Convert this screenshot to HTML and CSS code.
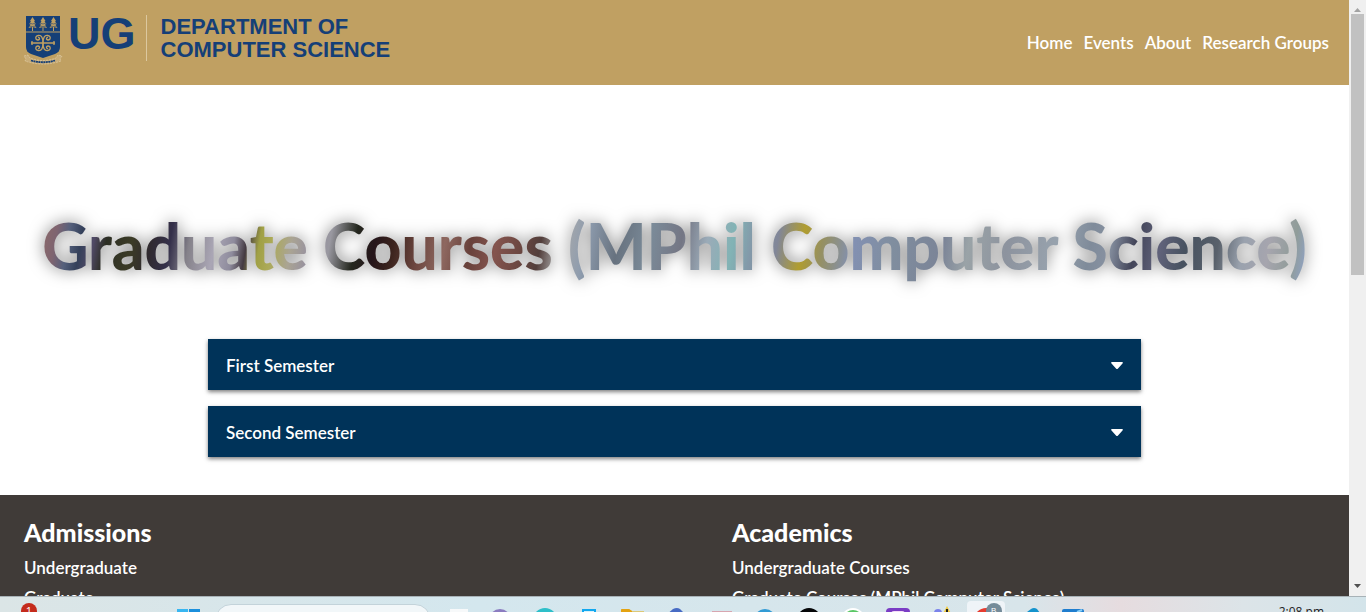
FILE: index.html
```html
<!DOCTYPE html>
<html lang="en">
<head>
<meta charset="utf-8">
<title>Graduate Courses - Department of Computer Science</title>
<link rel="stylesheet" href="styles.css">
</head>
<body>
<div class="browser">
  <div class="page">
    <header class="header">
      <a class="logo" href="#">
        <svg class="crest" viewBox="0 0 40 50" width="40" height="50" aria-hidden="true">
          <path d="M3 1H37V32Q37 37 32 39L20 43L8 39Q3 37 3 32Z" fill="#153f77"/>
          <path d="M3 17H37" stroke="#c0a062" stroke-width="1"/>
          <g stroke="#c0a062" fill="#c0a062">
            <g id="tree"><path d="M9.500 4V16" stroke-width="1"/><path d="M9.500 2L12 6L11 6.500L13 9L11.500 9.500L13.500 13L9.500 12L5.500 13L7.500 9.500L6 9L8 6.500L7 6Z" stroke="none"/><path d="M6 8L9.500 9L13 8M5.500 11L9.500 11.500L13.500 11" stroke="#153f77" stroke-width=".6" fill="none"/></g>
            <use href="#tree" x="10.500"/><use href="#tree" x="21"/>
          </g>
          <g fill="none" stroke="#c0a062" stroke-width="1.300">
            <path d="M8 28H32M9 26V30M31 26V30"/>
            <path d="M20 28Q20 20 15.500 20.500Q12 21 13 24Q15 26 16.500 24Q16.500 22 15 22.500"/>
            <path d="M20 28Q20 20 24.500 20.500Q28 21 27 24Q25 26 23.500 24Q23.500 22 25 22.500"/>
            <path d="M20 28Q20 36 15.500 35.500Q12 35 13 32Q15 30 16.500 32Q16.500 34 15 33.500"/>
            <path d="M20 28Q20 36 24.500 35.500Q28 35 27 32Q25 30 23.500 32Q23.500 34 25 33.500"/>
          </g>
          <path d="M1 41L5 40L7 43Q20 48 33 43L35 40L39 41L37 44L38 46Q20 52 2 46L3 44Z" fill="#c9ad78" stroke="#dfcda8" stroke-width=".7" stroke-dasharray="2 1"/>
          <path d="M8 45.500Q20 49 32 45.500" fill="none" stroke="#153f77" stroke-width="1.800" stroke-dasharray="2 .5"/>
        </svg>
        <span class="logo-ug">UG</span>
        <span class="logo-name">DEPARTMENT OF<br>COMPUTER SCIENCE</span>
      </a>
      <nav class="nav">
        <a href="#">Home</a><a href="#">Events</a><a href="#">About</a><a href="#">Research Groups</a>
      </nav>
    </header>
    <main class="main">
      <h1 class="title"><span>Graduate Courses (MPhil Computer Science)</span></h1>
      <div class="accordion">
        <button class="panel" type="button">First Semester<svg width="12" height="7" viewBox="0 0 12 7" aria-hidden="true"><path d="M1 0H11Q12.500 .5 11.500 1.500L7 6.500Q6 7.500 5 6.500L.5 1.500Q-.5 .5 1 0Z" fill="#fff"/></svg></button>
        <button class="panel" type="button">Second Semester<svg width="12" height="7" viewBox="0 0 12 7" aria-hidden="true"><path d="M1 0H11Q12.500 .5 11.500 1.500L7 6.500Q6 7.500 5 6.500L.5 1.500Q-.5 .5 1 0Z" fill="#fff"/></svg></button>
      </div>
    </main>
    <footer class="footer">
      <section>
        <h2>Admissions</h2>
        <a href="#">Undergraduate</a>
        <a href="#">Graduate</a>
      </section>
      <section>
        <h2>Academics</h2>
        <a href="#">Undergraduate Courses</a>
        <a href="#">Graduate Courses (MPhil Computer Science)</a>
      </section>
    </footer>
  </div>
  <div class="scrollbar" aria-hidden="true">
    <svg width="7" height="4" viewBox="0 0 7 4"><path d="M0 4L3.500 0L7 4Z" fill="#a3a3a3"/></svg>
    <div class="track"><div class="thumb"></div></div>
    <svg width="7" height="4" viewBox="0 0 7 4"><path d="M0 0H7L3.500 4Z" fill="#505050"/></svg>
  </div>
</div>
<div class="taskbar">
  <span class="alert">1</span>
  <svg class="start" width="24" height="24" viewBox="0 0 24 24"><path d="M0 0H11V11H0ZM0 12H11V23H0Z" fill="#38b6f1"/><path d="M12 0H23V11H12ZM12 12H23V23H12Z" fill="#1b8fdc"/></svg>
  <input class="search" type="text" aria-label="Search">
  <div class="apps">
    <svg viewBox="0 0 44 30"><path d="M13 12H31V30H13Z" fill="#f7f9fa"/></svg>
    <svg viewBox="0 0 44 30"><circle cx="19" cy="23" r="11" fill="#8b7cc0"/></svg>
    <svg viewBox="0 0 44 30"><circle cx="20" cy="23" r="12" fill="#2ebfc9"/></svg>
    <svg viewBox="0 0 44 30"><path d="M14 13H26V30H14Z" fill="#d8f1fb" stroke="#12a8ef" stroke-width="2"/></svg>
    <svg viewBox="0 0 44 30"><path d="M8 14V13Q8 12 9 12H16L19 14H31V30H8Z" fill="#ddc878"/><path d="M8 14V13Q8 12 9 12H16L19 14V16H8Z" fill="#e4a312"/></svg>
    <svg viewBox="0 0 44 30"><path d="M8 19L16 12Q20 10 23 12L31 20V30H8Z" fill="#476bc4"/></svg>
    <svg viewBox="0 0 44 30"><path d="M11 14H31V30H11Z" fill="#d8a6b0"/></svg>
    <svg viewBox="0 0 44 30"><circle cx="20" cy="23" r="11" fill="#329bd5"/></svg>
    <svg viewBox="0 0 44 30"><circle cx="20" cy="23" r="12" fill="#050608"/></svg>
    <svg viewBox="0 0 44 30"><circle cx="20" cy="23" r="11" fill="#5bc766" stroke="#fff" stroke-width="2"/></svg>
    <svg viewBox="0 0 44 30"><rect x="9" y="11" width="24" height="24" rx="4" fill="#7a3cc4"/><rect x="14" y="14" width="14" height="14" rx="3" fill="#f4dcf6"/></svg>
    <svg viewBox="0 0 44 30"><circle cx="17" cy="16" r="4" fill="#7b83eb"/><path d="M26 9L33 22H19Z" fill="#f2cb3d"/><path d="M26 12V16" stroke="#222" stroke-width="2"/></svg>
    <svg viewBox="0 0 44 30"><rect x="2" y="4" width="38" height="40" rx="4" fill="#eff4f8"/><circle cx="21" cy="23" r="12" fill="#e63c30"/><circle cx="29" cy="14" r="8" fill="#748b99"/><text x="26" y="16" font-family="Liberation Sans, sans-serif" font-size="8" fill="#fff">B</text></svg>
    <svg viewBox="0 0 44 30"><path d="M14 18L22 12Q25 10 28 12L34 20V30H14Z" fill="#1493cc"/></svg>
    <svg viewBox="0 0 44 30"><rect x="9" y="12" width="22" height="24" rx="2" fill="#1f7dce"/><path d="M24 15L29 13" stroke="#8ad0f8" stroke-width="2"/></svg>
  </div>
  <time class="clock">2:08 pm</time>
</div>
</body>
</html>
```

FILE: styles.css
```css
* { box-sizing: border-box; }
body {
  margin: 0;
  height: 100vh;
  overflow: hidden;
  display: flex;
  flex-direction: column;
  font-family: "Gill Sans", "Gill Sans MT", Lato, sans-serif;
  font-size: 17px;
  color: #fff;
  background: #fff;
}
a { color: inherit; text-decoration: none; }
.browser { flex: 1; min-height: 0; display: flex; }
.page { flex: 1; min-width: 0; overflow: hidden; background: #fff; }

.header {
  display: flex;
  justify-content: space-between;
  align-items: center;
  min-height: 85px;
  padding: 0 20px 0 23px;
  background: #c0a062;
}
.logo {
  display: flex;
  align-items: flex-start;
  padding-bottom: 6px;
  font-family: "Liberation Sans", Arial, sans-serif;
  font-weight: 700;
  color: #153f77;
}
.logo-ug { font-size: 45px; line-height: 38px; padding: 0 10px 0 5px; }
.logo-name {
  border-left: 1px solid #dcc89f;
  padding-left: 14px;
  font-size: 22px;
  line-height: 23px;
}
.nav { display: flex; gap: 11px; font-weight: 600; }

.main { padding: 124px 0 38px; }
.title {
  margin: 0 0 56px;
  text-align: center;
  font-size: 64px;
  line-height: 74px;
  font-weight: 900;
  white-space: nowrap;
}
.title span {
  color: transparent;
  background: linear-gradient(100deg,
    #8f6a68 0%, #7e6470 1.5%, #55607c 2.5%, #34405a 3.5%, #514a66 4.5%, #2c2e24 5.5%, #3b3b26 7.5%,
    #302a30 9%, #34304a 10.5%, #85828a 12%, #aaa6b5 14%, #8e8b9c 15.5%, #443a42 16.5%,
    #a0a044 17.5%, #acaa58 18.5%, #aaa493 20%, #96909f 21.5%, #9998a0 23%, #24271e 25%,
    #25151a 26.5%, #3c241e 28%, #6d4740 30%, #8e6860 32%, #68413b 34%, #84544e 36%,
    #6b4741 38%, #523e3b 39.5%, #aaa 41%, #8e9cae 43%, #67727f 45.5%, #7b8b99 48%,
    #747684 50.5%, #9babb8 52.5%, #82b3b5 54.5%, #8399a9 56%, #818698 58%,
    #b09d30 60%, #969060 61.5%, #8290b2 64%, #808e9f 67%, #7b8497 71%, #9aa3a7 73%,
    #8d939e 76%, #98a3ae 80%, #7f8b9a 82.5%, #8791a1 84%, #434559 86%, #60627a 88%,
    #475260 90%, #59616b 92.5%, #9aa2ae 94.5%, #a6a5ae 96.5%, #909c99 98.5%, #8fa3cf 100%);
  -webkit-background-clip: text;
  background-clip: text;
  filter: drop-shadow(0 0 8px rgba(0, 0, 0, .5));
}
.accordion {
  display: flex;
  flex-direction: column;
  gap: 16px;
  padding: 0 208px;
}
.panel {
  display: flex;
  justify-content: space-between;
  align-items: center;
  min-height: 51px;
  padding: 1px 18px 0;
  border: 0;
  background: #003359;
  color: #fff;
  font: inherit;
  font-weight: 600;
  box-shadow: 0 2px 4px rgba(0, 0, 0, .5);
}

.footer {
  display: grid;
  grid-template-columns: 6fr 5fr;
  padding: 23px 27px 24px 24px;
  min-height: 300px;
  background: #403b38;
  font-weight: 600;
}
.footer h2 { margin: 0 0 7px; font-size: 25px; line-height: 28px; font-weight: 900; }
.footer a { display: block; line-height: 30px; }

.scrollbar {
  width: 17px;
  padding: 8px 0;
  display: flex;
  flex-direction: column;
  align-items: center;
  gap: 2px;
  background: #f0f0f0;
}
.track { flex: 1; }
.thumb { width: 13px; height: 46%; background: #c1c1c1; }

.taskbar {
  position: relative;
  height: 16px;
  overflow: hidden;
  display: flex;
  align-items: flex-start;
  padding: 0 42px 0 177px;
  border-top: 1px solid #a8b2b7;
  background: linear-gradient(90deg, #dbe5e6, #d4e7ee 35%, #d8e5ea 75%, #e6dcdf 82%, #dce4e8 91%, #d3e4ea);
}
.alert {
  position: absolute;
  left: 21px;
  top: 6px;
  width: 16px;
  height: 16px;
  border-radius: 50%;
  background: #c42b1c;
  text-align: center;
  font: 11px/16px "Open Sans", sans-serif;
}
.start { margin-top: 12px; flex: none; }
.search {
  width: 216px;
  height: 32px;
  margin: 7px 6px 0 14px;
  border: 1px solid #c3d3da;
  border-radius: 16px;
  background: #f2f7f9;
  flex: none;
}
.apps { display: flex; flex: none; }
.apps svg { width: 44px; height: 30px; }
.clock {
  margin: 7px 0 0 auto;
  color: #222;
  font: 12px/16px "Open Sans", sans-serif;
}
```
